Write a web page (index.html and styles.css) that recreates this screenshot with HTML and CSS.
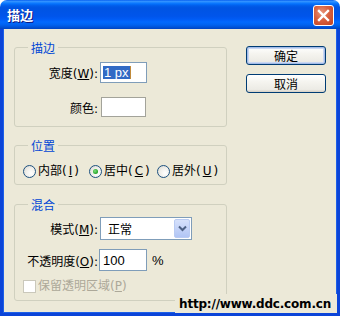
FILE: index.html
```html
<!DOCTYPE html>
<html lang="zh-CN">
<head>
<meta charset="utf-8">
<title>描边</title>
<link rel="stylesheet" href="styles.css">
</head>
<body>
<div class="win">
  <div class="titlebar">
    <span class="title">描边</span>
    <span class="close"><svg width="21" height="21" viewBox="0 0 21 21"><path d="M6 6 L15 15 M15 6 L6 15" stroke="#fff" stroke-width="2.4" stroke-linecap="square" fill="none"/></svg></span>
  </div>
  <div class="client">
    <div class="groups">
      <fieldset class="group g1">
        <legend>描边</legend>
        <div class="row r1">
          <span class="lbl">宽度(<u>W</u>):</span>
          <span class="input w-input"><span class="sel">1 px</span><span class="caret"></span></span>
        </div>
        <div class="row r2">
          <span class="lbl">颜色:</span>
          <span class="input c-input"></span>
        </div>
      </fieldset>
      <fieldset class="group g2">
        <legend>位置</legend>
        <div class="radios">
          <span class="radio-item ri1"><span class="radio"></span>内部(<u>I</u>)</span>
          <span class="radio-item ri2"><span class="radio on"></span>居中(<u>C</u>)</span>
          <span class="radio-item"><span class="radio"></span>居外(<u>U</u>)</span>
        </div>
      </fieldset>
      <fieldset class="group g3">
        <legend>混合</legend>
        <div class="row r3">
          <span class="lbl">模式(<u>M</u>):</span>
          <span class="select"><span class="sel-text">正常</span><span class="drop"><svg width="9" height="7" viewBox="0 0 9 7"><path d="M1 1.5 L4.5 5 L8 1.5" stroke="#4d6185" stroke-width="2" fill="none"/></svg></span></span>
        </div>
        <div class="row r4">
          <span class="lbl">不透明度(<u>O</u>):</span>
          <span class="input o-input">100</span>
          <span class="pct">%</span>
        </div>
        <div class="row r5">
          <span class="check"></span><span class="dis">保留透明区域(<u>P</u>)</span>
        </div>
      </fieldset>
    </div>
    <div class="buttons">
      <span class="btn default">确定</span>
      <span class="btn">取消</span>
    </div>
    <div class="watermark">http://www.ddc.com.cn</div>
  </div>
</div>
</body>
</html>
```
FILE: styles.css
```css
html, body {
  margin: 0;
  padding: 0;
  background: #ffffff;
}
body {
  font-family: "DejaVu Sans", "Noto Sans CJK SC", sans-serif;
  font-size: 12px;
  color: #000;
}
.win {
  width: 340px;
  height: 316px;
  display: flex;
  flex-direction: column;
}
.titlebar {
  height: 29px;
  flex: none;
  box-sizing: border-box;
  border-radius: 7px 7px 0 0;
  background: linear-gradient(to bottom, #0058ee 0%, #3593ff 4%, #288eff 7%, #127dff 10%, #036ffc 14%, #0262ee 18%, #0057e5 24%, #0054e3 30%, #0055eb 56%, #005bf5 66%, #026afe 76%, #0062ef 86%, #0052d6 94%, #0044c0 100%);
  display: flex;
  align-items: center;
  justify-content: space-between;
  padding: 0 6px 0 7px;
}
.title {
  color: #fff;
  font-family: "Noto Sans CJK SC", sans-serif;
  font-weight: bold;
  font-size: 13px;
  text-shadow: 1px 1px 0 #0a1883;
  line-height: 16px;
  padding-top: 1px;
}
.close {
  width: 21px;
  height: 21px;
  box-sizing: border-box;
  border: 1px solid #fff;
  border-radius: 3px;
  background: radial-gradient(circle at 40% 35%, #e8967c 0%, #d8603f 45%, #c2421f 100%);
  display: flex;
  align-items: center;
  justify-content: center;
  margin-top: 1px;
}
.close svg {
  display: block;
  margin: -1px;
}
.client {
  flex: 1;
  position: relative;
  background: #ece9d8;
  border: 3px solid #0b44d8;
  border-top: 0;
  box-shadow: inset 1px 0 0 #1c5fe8, inset -1px 0 0 #1c5fe8, inset 0 -1px 0 #1c5fe8;
  display: flex;
  align-items: flex-start;
  padding: 12px 0 0 11px;
}
.groups {
  width: 213px;
  display: flex;
  flex-direction: column;
}
.group {
  margin: 0;
  padding: 0;
  border: 1px solid #d0d0bf;
  border-radius: 3px;
  box-sizing: border-box;
  width: 213px;
  min-width: 0;
}
.group legend {
  margin-left: 13px;
  padding: 0 3px;
  color: #0046d5;
  font-family: "Noto Sans CJK SC", sans-serif;
  font-size: 12px;
  line-height: 13px;
  height: 13px;
}
.g1 { padding: 8px 0 9px 0; }
.g2 { margin-top: 12px; padding: 13px 0 6px 0; }
.g3 { margin-top: 13px; padding: 6px 0 7px 0; }
.row {
  display: flex;
  align-items: center;
}
.lbl {
  width: 85px;
  box-sizing: border-box;
  padding-right: 2px;
  text-align: right;
  white-space: nowrap;
}
.input {
  box-sizing: border-box;
  background: #fff;
  border: 1px solid #7f9db9;
  display: flex;
  align-items: center;
  font-family: "Liberation Sans", sans-serif;
  font-size: 13px;
}
.w-input {
  width: 47px;
  height: 21px;
  padding-left: 2px;
}
.sel {
  background: #316ac5;
  color: #fff;
  line-height: 13px;
  padding: 0 1px;
}
.caret {
  width: 1px;
  height: 13px;
  background: #c08a3a;
}
.r2 { margin-top: 14px; }
.c-input {
  width: 45px;
  height: 20px;
  margin-left: 1px;
  border-color: #a3a39a;
}
.radios {
  display: flex;
  align-items: center;
  height: 13px;
  padding-left: 8px;
}
.radio-item {
  display: flex;
  align-items: center;
  gap: 2px;
  white-space: nowrap;
  line-height: 13px;
}
.ri1 { width: 66px; }
.ri2 { width: 68px; }
.radio {
  width: 13px;
  height: 13px;
  box-sizing: border-box;
  border-radius: 50%;
  border: 1px solid #1c5180;
  background: radial-gradient(circle at 65% 65%, #ffffff 0%, #f0efea 50%, #d4d2c8 100%);
  display: inline-flex;
  align-items: center;
  justify-content: center;
  flex: none;
}
.radio.on::after {
  content: "";
  width: 5px;
  height: 5px;
  border-radius: 50%;
  background: radial-gradient(circle at 40% 40%, #7fe07f 0%, #21a121 70%, #1a8a1a 100%);
}
.select {
  width: 92px;
  height: 23px;
  box-sizing: border-box;
  border: 1px solid #7f9db9;
  background: #fff;
  display: flex;
  align-items: center;
  justify-content: space-between;
  padding: 1px;
  font-family: "Noto Sans CJK SC", sans-serif;
  font-size: 12px;
}
.sel-text {
  padding-left: 6px;
  line-height: 14px;
}
.drop {
  width: 16px;
  height: 19px;
  box-sizing: border-box;
  border: 1px solid #b9cbf3;
  border-radius: 2px;
  background: linear-gradient(to bottom, #d6e1fb 0%, #c4d3f8 50%, #b1c5f5 100%);
  display: flex;
  align-items: center;
  justify-content: center;
}
.drop svg { display: block; }
.r4 { margin-top: 9px; }
.o-input {
  width: 48px;
  height: 22px;
  margin-left: -1px;
  padding-left: 3px;
}
.pct {
  margin-left: 5px;
  font-family: "Liberation Sans", sans-serif;
  font-size: 13px;
}
.r5 {
  margin-top: 9px;
  padding-left: 8px;
  height: 13px;
}
.check {
  width: 13px;
  height: 13px;
  box-sizing: border-box;
  border: 1px solid #cac8bb;
  background: #fff;
  margin-right: 2px;
  flex: none;
}
.dis {
  color: #aca899;
  line-height: 13px;
  white-space: nowrap;
}
.buttons {
  margin-left: 19px;
  margin-top: 5px;
  display: flex;
  flex-direction: column;
  gap: 9px;
}
.btn {
  width: 80px;
  height: 19px;
  box-sizing: border-box;
  border: 1px solid #003c74;
  border-radius: 3px;
  background: linear-gradient(to bottom, #ffffff 0%, #f5f4ef 40%, #ecebe5 85%, #d6d0c5 100%);
  display: flex;
  align-items: center;
  justify-content: center;
  font-family: "Noto Sans CJK SC", sans-serif;
  font-size: 12px;
  line-height: 14px;
}
.btn.default {
  box-shadow: inset 0 0 0 1px #a4bce8, inset 0 0 0 2px #c9d7f2;
}
.watermark {
  position: absolute;
  right: 0;
  bottom: 0;
  background: #ece9d8;
  padding: 4px 6px 3px 4px;
  font-family: "DejaVu Sans", sans-serif;
  font-weight: bold;
  font-size: 12px;
  letter-spacing: -0.2px;
  line-height: 12px;
  color: #000;
}
```
